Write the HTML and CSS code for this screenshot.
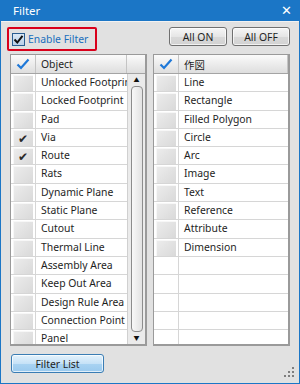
FILE: index.html
```html
<!DOCTYPE html>
<html lang="ja">
<head>
    <meta charset="UTF-8">
    <title>Filter</title>
    <link rel="stylesheet" href="styles.css">
</head>
<body>
    <div class="window">
        <div class="titlebar">
            <span class="title">Filter</span>
            <span class="close">&#x2715;</span>
        </div>

        <div class="content">
            <div class="toolbar">
                <label class="enable">
                    <span class="checkbox checked">
                        <svg width="11" height="11" viewBox="0 0 11 11"><path d="M1.5 5.5 L4.3 8.5 L9.5 1.8" fill="none" stroke="#111" stroke-width="2"/></svg>
                    </span>
                    Enable Filter
                </label>
                <div class="toolbar-buttons">
                    <button class="btn">All ON</button>
                    <button class="btn">All OFF</button>
                </div>
            </div>

            <div class="tables">
                <!-- Object list -->
                <div class="grid">
                    <div class="head">
                        <div class="hcell chk">
                            <svg width="14" height="12" viewBox="0 0 14 12"><path d="M1.5 6.5 L5 10 L12.5 1.5" fill="none" stroke="#1e78d8" stroke-width="2.2"/></svg>
                        </div>
                        <div class="hcell name">Object</div>
                        <div class="hcell corner"></div>
                    </div>
                    <div class="body">
                        <div class="rows">
                            <div class="row"><div class="chk"><span class="box"></span></div><div class="name">Unlocked Footprint</div></div>
                            <div class="row"><div class="chk"><span class="box"></span></div><div class="name">Locked Footprint</div></div>
                            <div class="row"><div class="chk"><span class="box"></span></div><div class="name">Pad</div></div>
                            <div class="row"><div class="chk"><span class="box on">&#x2714;</span></div><div class="name">Via</div></div>
                            <div class="row"><div class="chk"><span class="box on">&#x2714;</span></div><div class="name">Route</div></div>
                            <div class="row"><div class="chk"><span class="box"></span></div><div class="name">Rats</div></div>
                            <div class="row"><div class="chk"><span class="box"></span></div><div class="name">Dynamic Plane</div></div>
                            <div class="row"><div class="chk"><span class="box"></span></div><div class="name">Static Plane</div></div>
                            <div class="row"><div class="chk"><span class="box"></span></div><div class="name">Cutout</div></div>
                            <div class="row"><div class="chk"><span class="box"></span></div><div class="name">Thermal Line</div></div>
                            <div class="row"><div class="chk"><span class="box"></span></div><div class="name">Assembly Area</div></div>
                            <div class="row"><div class="chk"><span class="box"></span></div><div class="name">Keep Out Area</div></div>
                            <div class="row"><div class="chk"><span class="box"></span></div><div class="name">Design Rule Area</div></div>
                            <div class="row"><div class="chk"><span class="box"></span></div><div class="name">Connection Point</div></div>
                            <div class="row"><div class="chk"><span class="box"></span></div><div class="name">Panel</div></div>
                        </div>
                        <div class="vscroll">
                            <span class="arrow">&#x25B2;</span>
                            <span class="thumb"></span>
                            <span class="arrow">&#x25BC;</span>
                        </div>
                    </div>
                </div>

                <!-- Drawing list -->
                <div class="grid">
                    <div class="head">
                        <div class="hcell chk">
                            <svg width="14" height="12" viewBox="0 0 14 12"><path d="M1.5 6.5 L5 10 L12.5 1.5" fill="none" stroke="#1e78d8" stroke-width="2.2"/></svg>
                        </div>
                        <div class="hcell name">作図</div>
                    </div>
                    <div class="body">
                        <div class="rows">
                            <div class="row"><div class="chk"><span class="box"></span></div><div class="name">Line</div></div>
                            <div class="row"><div class="chk"><span class="box"></span></div><div class="name">Rectangle</div></div>
                            <div class="row"><div class="chk"><span class="box"></span></div><div class="name">Filled Polygon</div></div>
                            <div class="row"><div class="chk"><span class="box"></span></div><div class="name">Circle</div></div>
                            <div class="row"><div class="chk"><span class="box"></span></div><div class="name">Arc</div></div>
                            <div class="row"><div class="chk"><span class="box"></span></div><div class="name">Image</div></div>
                            <div class="row"><div class="chk"><span class="box"></span></div><div class="name">Text</div></div>
                            <div class="row"><div class="chk"><span class="box"></span></div><div class="name">Reference</div></div>
                            <div class="row"><div class="chk"><span class="box"></span></div><div class="name">Attribute</div></div>
                            <div class="row"><div class="chk"><span class="box"></span></div><div class="name">Dimension</div></div>
                            <div class="row empty"><div class="chk"></div><div class="name"></div></div>
                            <div class="row empty"><div class="chk"></div><div class="name"></div></div>
                            <div class="row empty"><div class="chk"></div><div class="name"></div></div>
                            <div class="row empty"><div class="chk"></div><div class="name"></div></div>
                            <div class="row empty"><div class="chk"></div><div class="name"></div></div>
                        </div>
                    </div>
                </div>
            </div>

            <div class="footer">
                <button class="btn btn-blue">Filter List</button>
                <div class="grip">
                    <i style="grid-area: 1 / 3"></i>
                    <i style="grid-area: 2 / 2"></i><i style="grid-area: 2 / 3"></i>
                    <i style="grid-area: 3 / 1"></i><i style="grid-area: 3 / 2"></i><i style="grid-area: 3 / 3"></i>
                </div>
            </div>
        </div>
    </div>
</body>
</html>
```

FILE: styles.css
```css
:root {
    --title-blue: #1b76c6;
    --window-bg: #e1e1e1;
    --grid-line: #d6d6d6;
    --frame: #9a9a9a;
    --text: #1e1e1e;
}

* {
    box-sizing: border-box;
    margin: 0;
    padding: 0;
}

body {
    width: 300px;
    height: 384px;
    overflow: hidden;
    font-family: 'Noto Sans', 'Noto Sans CJK JP', sans-serif;
    font-size: 10.4px;
    color: var(--text);
}

/* Window frame */
.window {
    width: 300px;
    height: 384px;
    display: flex;
    flex-direction: column;
    background-color: var(--window-bg);
    border: 1px solid var(--title-blue);
    border-top: none;
}

.titlebar {
    height: 21px;
    flex: none;
    background-color: var(--title-blue);
    color: white;
    display: flex;
    align-items: center;
    justify-content: space-between;
    padding: 0 7px 0 12px;
    font-size: 11.5px;
}

.close {
    font-size: 13px;
    line-height: 1;
}

.content {
    flex: 1;
    display: flex;
    flex-direction: column;
    padding: 5px 9px 0 9px;
    border-top: 1px solid #f2f2f2;
}

/* Top row */
.toolbar {
    height: 24px;
    display: flex;
    justify-content: space-between;
    align-items: flex-start;
}

.enable {
    width: 90px;
    height: 24px;
    margin-left: -3px;
    border: 2px solid #d9001b;
    border-radius: 2px;
    display: flex;
    align-items: center;
    gap: 3px;
    padding-left: 3px;
    color: #1a6fbd;
}

.checkbox {
    width: 13px;
    height: 13px;
    border: 1px solid #2a5d91;
    background: linear-gradient(#dbe8f5, #b9d0e8);
    display: flex;
    align-items: center;
    justify-content: center;
}

.toolbar-buttons {
    display: flex;
    gap: 5px;
}

.btn {
    font-family: inherit;
    font-size: 10.4px;
    color: var(--text);
    height: 19px;
    border: 1px solid #707070;
    border-radius: 3px;
    background: linear-gradient(#f6f6f6, #e6e6e6 50%, #d9d9d9 51%, #d2d2d2);
    box-shadow: inset 0 0 0 1px rgba(255, 255, 255, 0.7);
}

.toolbar-buttons .btn {
    width: 58px;
}

/* Lists */
.tables {
    display: flex;
    gap: 6px;
    margin-top: 3px;
}

.grid {
    width: 137px;
    height: 292px;
    display: flex;
    flex-direction: column;
    border: 1px solid var(--frame);
    border-right-width: 2px;
    border-bottom-width: 2px;
    background-color: white;
    overflow: hidden;
}

.head {
    height: 19px;
    flex: none;
    display: flex;
    background: linear-gradient(#fbfbfb, #ececec 50%, #dedede);
    border-bottom: 1px solid #a4a4a4;
}

.hcell {
    display: flex;
    align-items: center;
    border-right: 1px solid #c4c4c4;
}

.hcell.chk {
    width: 25px;
    justify-content: center;
}

.hcell.name {
    flex: 1;
    padding-left: 5px;
}

.hcell.corner {
    width: 18px;
    border-right: none;
}

.body {
    flex: 1;
    display: flex;
    min-height: 0;
}

.rows {
    flex: 1;
    overflow: hidden;
}

.row {
    height: 18.3px;
    display: flex;
    border-bottom: 1px solid var(--grid-line);
}

.row .chk {
    width: 25px;
    flex: none;
    padding: 1px 2px 0 2px;
    border-right: 1px solid var(--grid-line);
}

.row .name {
    flex: 1;
    white-space: nowrap;
    overflow: hidden;
    padding-left: 5px;
    line-height: 16px;
}

.box {
    display: flex;
    align-items: center;
    justify-content: center;
    height: 100%;
    background: linear-gradient(135deg, #ededed, #d9d9d9);
    box-shadow: inset 1px 1px 0 #f7f7f7;
    font-size: 12px;
    color: #2a2a2a;
}

/* Scrollbar of the object list */
.vscroll {
    width: 18px;
    flex: none;
    display: flex;
    flex-direction: column;
    align-items: center;
    background-color: #ebebeb;
    border-left: 1px solid #d0d0d0;
}

.arrow {
    font-size: 6px;
    line-height: 1;
    height: 12px;
    display: flex;
    align-items: center;
    color: #111;
}

.thumb {
    flex: 1;
    width: 12px;
    border: 1px solid #8c8c8c;
    border-radius: 4px;
    background: linear-gradient(90deg, #f8f8f8, #e2e2e2);
}

/* Bottom row */
.footer {
    flex: 1;
    display: flex;
    justify-content: space-between;
    padding-top: 8px;
}

.btn-blue {
    width: 93px;
    margin-left: 1px;
    border-color: #3a7db4;
    background: linear-gradient(#e4f2fc, #c6e2f7 50%, #a9d3f2 51%, #99c9ee);
}

.grip {
    align-self: flex-end;
    display: grid;
    grid-template-columns: repeat(3, 2px);
    grid-template-rows: repeat(3, 2px);
    gap: 2px;
    margin: 0 -4px 6px 0;
}

.grip i {
    background-color: #7e7e7e;
}
```
